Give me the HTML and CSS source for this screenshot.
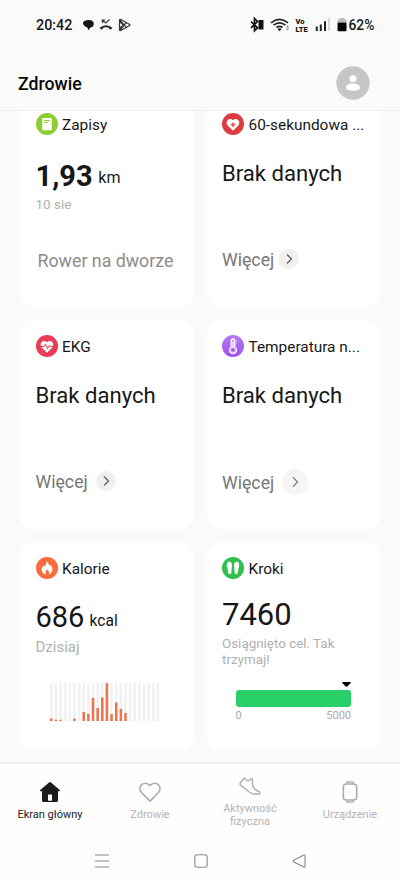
FILE: index.html
```html
<!DOCTYPE html>
<html lang="pl">
<head>
<meta charset="utf-8">
<title>Zdrowie</title>
<link rel="stylesheet" href="styles.css">
</head>
<body>
<div class="statusbar">
  <span class="clock">20:42</span>
  <svg class="st-left" width="50" height="14" viewBox="0 0 50 14">
    <path d="M1 3.200Q4.800 1 9 2.500Q12 5 10 8.500L6.800 10L6 12.500L4.200 9.500Q-.5 7.500 0 4.600Z" fill="#151515"/>
    <path d="M16.500 9.700Q23 4.700 29.500 9.700L27.500 11.800L25.200 9.600Q23 8.800 20.800 9.600L18.500 11.800Z" fill="#222"/>
    <path d="M19.300 5V2H22.300M19.500 2.200L22.800 5L26.500 1.500" fill="none" stroke="#333" stroke-width="1.100"/>
    <path d="M36.500 2.200Q36.500 1 37.700 1.500L46.300 6.200Q47.500 7 46.300 7.700L37.700 12.500Q36.500 13 36.500 11.800ZM37 2.200L43 9.200M37 12L43 4.800M37 4L40.500 7L37 10" fill="none" stroke="#333" stroke-width="1.200"/>
  </svg>
  <svg class="st-right" width="45" height="16" viewBox="0 0 45 16">
    <path d="M1 4.500L7.500 10.800L4.500 13.800V1.500L7.500 4.500L1 10.800" fill="none" stroke="#111" stroke-width="1.700"/>
    <rect x="8.500" y="3" width="5" height="9.500" fill="#111"/>
    <path d="M21 5.800Q29.500 -1.200 38 5.800M23.500 8.200Q29.500 3.500 35.500 8.200M26.500 10.500Q29.500 8.200 32.500 10.500" fill="none" stroke="#222" stroke-width="1.700"/>
    <path d="M27.500 12Q29.500 10.500 31.500 12L29.500 14.200Z" fill="#111"/>
    <path d="M36 10.500L37.500 8.500L39 10.500ZM36 11.700L37.500 13.500L39 11.700Z" fill="#777"/>
  </svg>
  <span class="volte"><span>Vo</span><span>LTE</span></span>
  <svg class="signal" width="32" height="16" viewBox="0 0 32 16">
    <path d="M1.800 9.500V14M5.800 7.500V14M10 4.200V14" stroke="#222" stroke-width="2"/>
    <path d="M14 1V14" stroke="#d8d8d8" stroke-width="2"/>
    <path d="M22.500 5.500V2.500H24.500V1H29.500V2.500H31.500V5.500Z" fill="#bbb"/>
    <rect x="22.500" y="5.500" width="9" height="8.700" rx="1" fill="#050505"/>
  </svg>
  <span class="percent">62%</span>
</div>
<header class="header">
  <h1>Zdrowie</h1>
  <svg width="34" height="34" viewBox="0 0 34 34"><circle cx="17" cy="17" r="16.700" fill="#c6c6c6"/><circle cx="17" cy="12.700" r="3.500" fill="#fff"/><path d="M10 22C10 18.800 13.500 17.600 17 17.600S24 18.800 24 22Q23.500 24.800 17 24.800T10 22Z" fill="#fff"/></svg>
</header>
<main class="content">
  <div class="grid">
    <section class="card">
      <div class="title"><svg viewBox="0 0 22 22"><circle cx="11" cy="11" r="11" fill="#91cc34"/><rect x="6.200" y="5" width="9.600" height="12.200" rx="1" fill="#fff"/><path d="M8 7.500H14M8 9.500H11.500" stroke="#91cc34"/></svg><h2>Zapisy</h2></div>
      <div class="value bold">1,93 <span class="unit">km</span></div>
      <div class="date">10 sie</div>
      <div class="activity">Rower na dworze</div>
    </section>
    <section class="card">
      <div class="title"><svg viewBox="0 0 22 22"><circle cx="11" cy="11" r="11" fill="#df3c40"/><path d="M11 17.700L5.700 12.400C2.600 8.300 7.500 3.700 11 7.300C14.500 3.700 19.400 8.300 16.300 12.400Z" fill="#fff"/><path d="M11 9.500V14M8.800 11.700H13.200" stroke="#df3c40" stroke-width="1.300"/></svg><h2>60-sekundowa ...</h2></div>
      <div class="empty">Brak danych</div>
      <div class="more near">Więcej<svg viewBox="0 0 20 20"><circle cx="10" cy="10" r="10" fill="#f0f0f0"/><path d="M8 5.500L12.500 10L8 14.500" fill="none" stroke="#666" stroke-width="1.400"/></svg></div>
    </section>
    <section class="card">
      <div class="title"><svg viewBox="0 0 22 22"><circle cx="11" cy="11" r="11" fill="#e83d54"/><path d="M11 17.700L5.700 12.400C2.600 8.300 7.500 3.700 11 7.300C14.500 3.700 19.400 8.300 16.300 12.400Z" fill="#fff"/><path d="M4 11.500H8L9.500 9L11.500 13.500L13.200 10.500L14 11.500H18" fill="none" stroke="#e83d54"/></svg><h2>EKG</h2></div>
      <div class="empty">Brak danych</div>
      <div class="more">Więcej<svg viewBox="0 0 20 20"><circle cx="10" cy="10" r="10" fill="#f0f0f0"/><path d="M8 5.500L12.500 10L8 14.500" fill="none" stroke="#666" stroke-width="1.400"/></svg></div>
    </section>
    <section class="card">
      <div class="title"><svg viewBox="0 0 22 22"><defs><linearGradient id="violet" x2="0" y2="1"><stop stop-color="#b47cf0"/><stop offset="1" stop-color="#a050f2"/></linearGradient></defs><circle cx="11" cy="11" r="11" fill="url(#violet)"/><path d="M9.200 12V5.500Q9.200 4 11 4T12.800 5.500V12A3.500 3.500 0 1 1 9.200 12Z" fill="#c99bf5" stroke="#fff" stroke-width="1.300"/><path d="M11 7V13" stroke="#fff" stroke-width="1.200"/><circle cx="11" cy="15" r="1.500" fill="#a050f2"/><path d="M14 6H15.500M14 8H15" stroke="#e5cffc" stroke-width=".8"/></svg><h2>Temperatura n...</h2></div>
      <div class="empty">Brak danych</div>
      <div class="more large">Więcej<svg viewBox="0 0 26 26"><circle cx="13" cy="13" r="13" fill="#f5f5f5"/><path d="M11 8.200L15.500 13L11 17.800" fill="none" stroke="#777" stroke-width="1.200"/></svg></div>
    </section>
    <section class="card">
      <div class="title"><svg viewBox="0 0 22 22"><circle cx="11" cy="11" r="11" fill="#fb6b3b"/><path d="M10.500 4C11.500 5.300 13 6.500 13.200 9L14.500 7.700C16 10 17 12 16.200 14.200Q15.300 17 12.500 17.400Q14 15 11.400 12.200Q8.300 15 10 17.400Q6.500 17 5.800 14C5.200 11.500 6.500 9.800 7.800 8.200L8.700 9.500Q10.800 7 10.500 4Z" fill="#fff"/></svg><h2>Kalorie</h2></div>
      <div class="value kcal">686 <span class="unit">kcal</span></div>
      <div class="today">Dzisiaj</div>
      <svg class="chart" width="110" height="38" viewBox="0 0 110 38">
        <path d="M1.250 0V38M5.890 0V38M10.530 0V38M15.170 0V38M19.810 0V38M24.450 0V38M29.090 0V38M33.730 0V38M38.370 0V38M43.010 0V38M47.650 0V38M52.290 0V38M56.930 0V38M61.570 0V38M66.210 0V38M70.850 0V38M75.490 0V38M80.130 0V38M84.770 0V38M89.410 0V38M94.050 0V38M98.690 0V38M103.330 0V38M107.970 0V38" stroke="#f1f1f1" stroke-width="2.500"/>
        <path d="M1.250 38V35.500M5.890 38V36.800M10.530 38V36.800M24.450 38V35.500M33.730 38V29M38.370 38V31M43.010 38V15M47.650 38V25M52.290 38V14.500M56.930 38V0M61.570 38V31M66.210 38V19.500M70.850 38V26M75.490 38V30" stroke="#ec734b" stroke-width="2.500"/>
      </svg>
    </section>
    <section class="card">
      <div class="title"><svg viewBox="0 0 22 22"><circle cx="11" cy="11" r="11" fill="#32bf50"/><path d="M7.300 4.800C9.800 4.800 10.300 7.500 9.900 10.200Q9.300 12 9.500 15Q9.300 17.300 7.700 17.300Q6.200 17.300 6.100 14.500Q6 12.500 5 9.800C4.300 7 5.300 4.800 7.300 4.800ZM14.700 4.800C12.200 4.800 11.700 7.500 12.100 10.200Q12.700 12 12.500 15Q12.700 17.300 14.300 17.300Q15.800 17.300 15.900 14.500Q16 12.500 17 9.800C17.700 7 16.700 4.800 14.700 4.800Z" fill="#fff"/></svg><h2>Kroki</h2></div>
      <div class="steps">7460</div>
      <div class="goal">Osiągnięto cel. Tak trzymaj!</div>
      <div class="progress">
        <svg class="marker" width="9" height="5" viewBox="0 0 9 5"><path d="M.8 0H8.200Q9 .5 8.400 1.200L5.300 4.500Q4.500 5 3.700 4.500L.6 1.200Q0 .5 .8 0Z"/></svg>
        <div class="bar"></div>
        <div class="scale"><span>0</span><span>5000</span></div>
      </div>
    </section>
  </div>
</main>
<nav class="tabs">
  <a class="tab active"><svg width="22" height="22" viewBox="0 0 22 22"><path d="M11 1Q11.500 1 12 1.500L21 9.200Q21.400 10.200 20.300 10.300H19V19.500Q19 21 17.500 21H4.500Q3 21 3 19.500V10.300H1.700Q.6 10.200 1 9.200L10 1.500Q10.500 1 11 1Z" fill="#1c1c1c"/><rect x="9" y="13.500" width="4" height="6.200" rx=".5" fill="#fff"/></svg><span>Ekran główny</span></a>
  <a class="tab"><svg width="24" height="22" viewBox="0 0 24 22"><path d="M12 20.200L3.500 11.500C-1.200 6 6 -1.500 12 4.500C18 -1.500 25.200 6 20.500 11.500Z" fill="none" stroke="#adadad" stroke-width="1.700" stroke-linejoin="round"/></svg><span>Zdrowie</span></a>
  <a class="tab double"><svg width="22" height="19" viewBox="0 0 22 19"><path d="M1 6.500L4.800 1.500Q6.500 1 7 3Q9 4.300 10.500 3L12.500 1.700Q13.500 1.500 13.500 3V7.500Q13.500 9.500 15 11L17.500 13.500L20 14.500Q21.500 15.500 20 17H15.500Q13 16.800 11 15.500L1.500 8Q.6 7.200 1 6.500Z" fill="none" stroke="#adadad" stroke-width="1.400" stroke-linejoin="round"/></svg><span>Aktywność fizyczna</span></a>
  <a class="tab"><svg width="16" height="22" viewBox="0 0 16 22"><path d="M4.500 2.500L5.300 .9H10.700L11.500 2.500M4.500 19.500L5.300 21.100H10.700L11.500 19.500" fill="none" stroke="#adadad" stroke-width="1.500"/><rect x="1.300" y="3" width="13.400" height="16" rx="3" fill="none" stroke="#adadad" stroke-width="1.600"/></svg><span>Urządzenie</span></a>
</nav>
<div class="system">
  <svg width="14" height="14" viewBox="0 0 14 14"><path d="M0 1H14M0 7H14M0 13H14" stroke="#8a8a8a" stroke-width="1.100"/></svg>
  <svg width="14" height="14" viewBox="0 0 14 14"><rect x=".8" y=".8" width="12.400" height="12.400" rx="2.500" fill="none" stroke="#8a8a8a" stroke-width="1.100"/></svg>
  <svg width="14" height="14" viewBox="0 0 14 14"><path d="M12 1Q13 .5 13 1.500V12.500Q13 13.500 12 13L1.500 7.700Q.5 7 1.500 6.300Z" fill="none" stroke="#8a8a8a" stroke-width="1.100"/></svg>
</div>
</body>
</html>
```
FILE: styles.css
```css
* { box-sizing: border-box; }
body {
  margin: 0;
  height: 886px;
  display: flex;
  flex-direction: column;
  overflow: hidden;
  background: #fafafa;
  color: #171717;
  font-family: Roboto, sans-serif;
}
svg { display: block; flex: none; }
h1, h2 { margin: 0; }

.statusbar {
  height: 50px;
  padding: 0 20px 0 36px;
  display: flex;
  align-items: center;
  white-space: nowrap;
}
.clock { width: 47px; font-size: 14.3px; font-weight: 500; }
.st-right { margin-left: 117px; }
.volte {
  width: 17px;
  padding-left: .5px;
  display: flex;
  flex-direction: column;
  gap: 1px;
  font-size: 7.5px;
  font-weight: 900;
  line-height: 7px;
}
.signal { margin-left: 3px; }
.percent { margin-left: 1.5px; font-size: 13.8px; font-weight: 500; }

.header {
  height: 61px;
  padding: 6px 30px 0 18px;
  display: flex;
  justify-content: space-between;
  align-items: center;
  border-bottom: 1px solid #f0f0f0;
}
.header h1 { padding-top: 1px; color: #090909; font-size: 17.7px; font-weight: 500; }

.content { height: 651px; overflow: hidden; }
.grid {
  margin-top: -13px;
  padding: 0 20px;
  display: grid;
  grid-template-columns: 173.5px 173.5px;
  grid-auto-rows: 208.5px;
  gap: 13.5px 13px;
}
.card { padding: 15px 10px 0 15.5px; border-radius: 14px; background: #fff; }
.title { height: 22px; display: flex; align-items: center; gap: 4.5px; }
.title svg { width: 22px; height: 22px; }
.title h2 {
  padding-top: 1px;
  font-size: 15.4px;
  font-weight: 400;
  line-height: 22px;
  white-space: nowrap;
}
.value { margin-top: 24px; font-size: 29px; line-height: 34px; white-space: nowrap; }
.unit {
  display: inline-block;
  margin-left: -2px;
  font-size: 15.6px;
  font-weight: 400;
  line-height: 16px;
  transform: translateY(-1.5px);
}
.bold { font-weight: 700; }
.bold .unit { margin-left: -1.5px; font-size: 16px; transform: translateY(-3px); }
.kcal { margin-top: 21px; }
.date { margin-top: 1.5px; color: #b0b0b0; font-size: 13.5px; line-height: 18px; }
.activity { margin: 36px 0 0 2px; color: #8c8c8c; font-size: 17.8px; line-height: 24px; white-space: nowrap; }
.empty { margin-top: 23px; font-size: 22.1px; line-height: 30px; white-space: nowrap; }
.more {
  height: 24px;
  margin-top: 59.5px;
  display: flex;
  align-items: center;
  gap: 8px;
  color: #777;
  font-size: 17.7px;
}
.more svg { width: 20px; height: 20px; margin-top: -2px; }
.near { gap: 5px; }
.large { margin-top: 60.5px; }
.large svg { width: 26px; height: 26px; }
.today { margin-top: 3px; color: #b0b0b0; font-size: 15px; line-height: 20px; }
.chart { margin: 26px 0 0 14.5px; }
.steps { margin-top: 17.5px; font-size: 31px; line-height: 36px; }
.goal { margin-top: 3px; color: #b0b0b0; font-size: 13.4px; line-height: 16px; }
.progress { width: 115.5px; margin: 14.5px 0 0 13.5px; }
.marker { margin-left: 106px; }
.bar { height: 17px; margin-top: 3px; border-radius: 3px; background: #29cf68; }
.scale { padding-top: 1.5px; display: flex; justify-content: space-between; color: #aaa; font-size: 11px; line-height: 14px; }

.tabs {
  height: 74px;
  padding-top: 17px;
  display: grid;
  grid-template-columns: repeat(4, 1fr);
  background: #fefefe;
  border-top: 2px solid #eee;
}
.tab {
  display: flex;
  flex-direction: column;
  align-items: center;
  gap: 4px;
  color: #b3b3b3;
  font-size: 11px;
  line-height: 13px;
  text-align: center;
}
.tab.active { color: #1c1c1c; }
.tab span { margin-top: 1px; }
.double { margin-top: -4px; padding: 0 20px; gap: 5px; }
.system { flex: 1; display: flex; justify-content: space-between; align-items: center; padding: 0 94px 0 95px; background: #fefefe; }
```
